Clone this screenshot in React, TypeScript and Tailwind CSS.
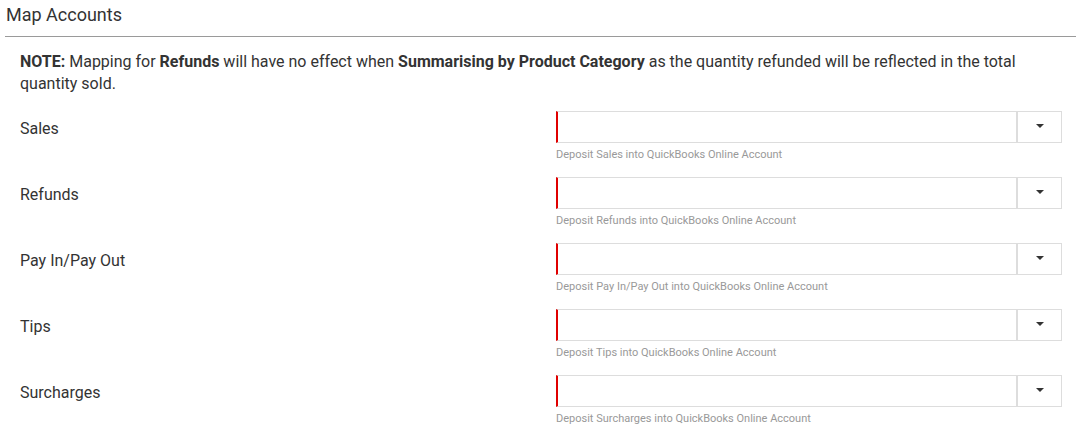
import React from "react";

const rows = ["Sales", "Refunds", "Pay In/Pay Out", "Tips", "Surcharges"];

function Row({ label }: { label: string }) {
  return (
    <div className="flex mb-[14px]">
      <div className="w-[536px] shrink-0 pt-[6px] text-[16px] leading-[24px] text-[#333]">{label}</div>
      <div className="flex-1">
        <div className="flex h-[32px]">
          <div className="flex-1 border border-[#dddddd] border-l-2 border-l-[#e00000] bg-white" />
          <div className="w-[45px] shrink-0 border border-[#dddddd] bg-white flex items-center justify-center">
            <div className="w-0 h-0 border-l-[4px] border-r-[4px] border-t-[4px] border-l-transparent border-r-transparent border-t-[#333] -mt-[2px]" />
          </div>
        </div>
        <div className="mt-[4px] text-[11px] leading-[16px] text-[#999]">
          Deposit {label} into QuickBooks Online Account
        </div>
      </div>
    </div>
  );
}

export default function App() {
  return (
    <div className="w-[1081px] h-[430px] bg-white overflow-hidden font-['Roboto',sans-serif] text-[#333]">
      <div className="mx-[5px] h-[37px] border-b border-[#9a9a9a] pl-[1px] pt-[3px] text-[18px] leading-[24px] text-[#333]">
        Map Accounts
      </div>
      <div className="pl-[20px] pr-[19px]">
        <p className="pt-[14px] text-[16px] leading-[22px] text-[#333]">
          <span className="font-bold">NOTE:</span> Mapping for <span className="font-bold">Refunds</span> will have no
          effect when <span className="font-bold">Summarising by Product Category</span> as the quantity refunded will be
          reflected in the total quantity sold.
        </p>
        <div className="mt-[16px]">
          {rows.map((r) => (
            <Row key={r} label={r} />
          ))}
        </div>
      </div>
    </div>
  );
}
